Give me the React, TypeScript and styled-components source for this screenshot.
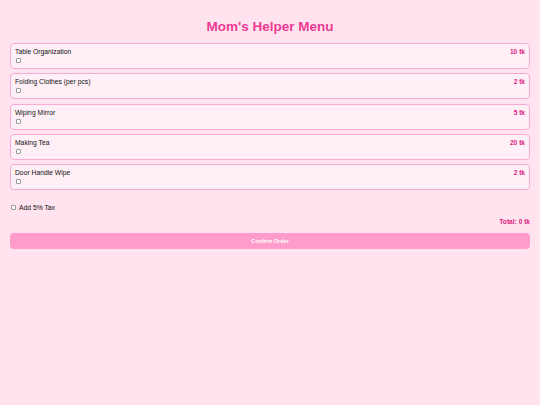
import React, { useState } from "react";
import styled, { createGlobalStyle } from "styled-components";

const Global = createGlobalStyle`
  html, body { margin: 0; padding: 0; background: #ffe4f0; }
  body { font-family: "Liberation Sans", Arial, sans-serif; }
  * { box-sizing: border-box; }
`;

const Page = styled.div`
  padding: 17px 10px 10px;
  display: flex;
  flex-direction: column;
`;

const Title = styled.h1`
  margin: 0 0 6px;
  text-align: center;
  font-size: 13.5px;
  line-height: 20px;
  font-weight: bold;
  color: #ec3a93;
`;

const List = styled.div`
  display: flex;
  flex-direction: column;
  gap: 4.25px;
`;

const Card = styled.div`
  display: flex;
  justify-content: space-between;
  align-items: flex-start;
  height: 26px;
  padding: 3px 4px 0 4px;
  background: #fff0f7;
  border: 1.5px solid #f7aad2;
  border-radius: 4px;
`;

const Left = styled.div`
  display: flex;
  flex-direction: column;
`;

const Name = styled.span`
  font-size: 6.75px;
  line-height: 9px;
  color: #111;
`;

const Check = styled.input<{ $m?: string }>`
  appearance: none;
  -webkit-appearance: none;
  margin: ${(p) => p.$m || "2px 0 0 1px"};
  width: 5px;
  height: 5px;
  border: 0.6px solid #9a9a9a;
  border-radius: 1px;
  background: #fff;
  flex: none;
  &:checked {
    background: #e0207e;
    border-color: #e0207e;
  }
`;

const Price = styled.span`
  font-size: 6.6px;
  line-height: 9px;
  font-weight: bold;
  color: #e0207e;
`;

const TaxRow = styled.label`
  display: flex;
  align-items: center;
  gap: 3px;
  margin: 13px 0 0 1px;
  font-size: 6.75px;
  line-height: 9px;
  color: #111;
`;

const Total = styled.div`
  margin-top: 5px;
  text-align: right;
  font-size: 6.6px;
  line-height: 9px;
  font-weight: bold;
  color: #e0207e;
`;

const Button = styled.button`
  margin-top: 6.5px;
  height: 16px;
  border: none;
  border-radius: 4px;
  background: #ff9ccb;
  color: #fff;
  font-family: "Liberation Sans", Arial, sans-serif;
  font-size: 5.5px;
  font-weight: bold;
`;

const items = [
  { name: "Table Organization", price: 10 },
  { name: "Folding Clothes (per pcs)", price: 2 },
  { name: "Wiping Mirror", price: 5 },
  { name: "Making Tea", price: 20 },
  { name: "Door Handle Wipe", price: 2 },
];

export default function App() {
  const [sel, setSel] = useState<boolean[]>(items.map(() => false));
  const [tax, setTax] = useState(false);
  const sum = items.reduce((a, it, i) => a + (sel[i] ? it.price : 0), 0);
  const total = tax ? Math.round(sum * 1.05 * 100) / 100 : sum;
  return (
    <Page>
      <Global />
      <Title>Mom's Helper Menu</Title>
      <List>
        {items.map((it, i) => (
          <Card key={it.name}>
            <Left>
              <Name>{it.name}</Name>
              <Check
                type="checkbox"
                checked={sel[i]}
                onChange={() => setSel(sel.map((v, j) => (j === i ? !v : v)))}
              />
            </Left>
            <Price>{it.price} tk</Price>
          </Card>
        ))}
      </List>
      <TaxRow>
        <Check $m="0" type="checkbox" checked={tax} onChange={() => setTax(!tax)} />
        Add 5% Tax
      </TaxRow>
      <Total>Total: {total} tk</Total>
      <Button>Confirm Order</Button>
    </Page>
  );
}
